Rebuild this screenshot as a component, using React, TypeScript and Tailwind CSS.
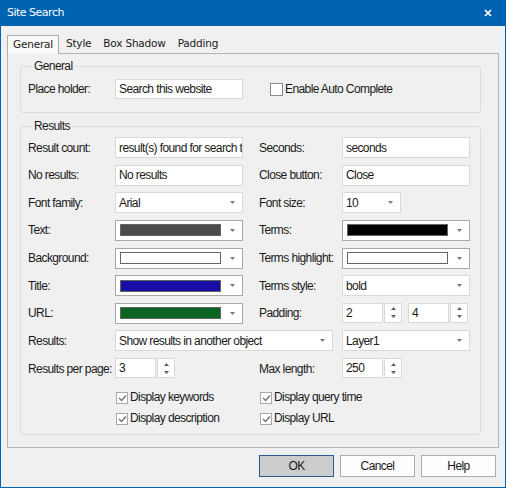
import React from "react";

const Arrow = () => (
  <svg width="5" height="3" viewBox="0 0 5 3" className="shrink-0">
    <polygon points="0,0 5,0 2.5,3" fill="#7a7a7a" />
  </svg>
);

const Input = ({ value, w = "w-[128px]" }: { value: string; w?: string }) => (
  <div className={`${w} h-[21px] border border-[#d9d9d9] bg-white pl-[3px] flex items-center overflow-hidden whitespace-nowrap`}>
    {value}
  </div>
);

const Combo = ({ value, w = "w-[128px]" }: { value: string; w?: string }) => (
  <div className={`${w} h-[21px] border border-[#d9d9d9] bg-white pl-[3px] pr-[7px] flex items-center justify-between overflow-hidden whitespace-nowrap`}>
    <span>{value}</span>
    <Arrow />
  </div>
);

const ColorCombo = ({ color }: { color: string }) => (
  <div className="w-[128px] h-[21px] border border-[#a9a9a9] bg-white pl-[4px] pr-[7px] flex items-center justify-between">
    <div className="w-[101px] h-[12px] border border-[#646464]" style={{ background: color }} />
    <Arrow />
  </div>
);

const Spin = ({ value }: { value: string }) => (
  <div className="flex gap-[1px]">
    <div className="w-[41px] h-[20px] border border-[#d9d9d9] bg-white pl-[3px] flex items-center">{value}</div>
    <div className="w-[18px] h-[20px] border border-[#d9d9d9] bg-white flex flex-col items-center justify-center gap-[5px]">
      <svg width="5" height="3" viewBox="0 0 5 3">
        <polygon points="0,3 5,3 2.5,0" fill="#606060" />
      </svg>
      <svg width="5" height="3" viewBox="0 0 5 3">
        <polygon points="0,0 5,0 2.5,3" fill="#606060" />
      </svg>
    </div>
  </div>
);

const Check = ({ checked, label, size = "w-[12px] h-[12px]" }: { checked?: boolean; label: string; size?: string }) => (
  <div className="h-[13px] flex items-center gap-[2px] whitespace-nowrap">
    <div className={`${size} shrink-0 border ${checked ? "border-[#a8a8a8]" : "border-[#8a8a8a]"} bg-white flex items-center justify-center`}>
      {checked && (
        <svg width="9" height="8" viewBox="0 0 9 8">
          <polyline points="1,4 3.5,6.5 8,1.5" fill="none" stroke="#707070" strokeWidth="1.3" />
        </svg>
      )}
    </div>
    <span className="leading-[13px]">{label}</span>
  </div>
);

const Label = ({ children, right }: { children: React.ReactNode; right?: boolean }) => (
  <div className={`h-[21px] flex items-center whitespace-nowrap ${right ? "pl-[16px]" : ""}`}>{children}</div>
);

export default function App() {
  return (
    <div className="w-[506px] h-[488px] bg-[#f0f0f0] border-x border-b border-[#0063b1] flex flex-col font-['Liberation_Sans',Arial,sans-serif] text-[12px] tracking-[-0.6px] text-[#1a1a1a]">
      {/* Title bar */}
      <div className="h-[26px] shrink-0 bg-[#0063b1] flex items-center justify-between pl-[6px] pr-[13px]">
        <span className="font-['DejaVu_Sans',sans-serif] text-[11px] tracking-[-0.5px] text-white">Site Search</span>
        <svg width="8" height="8" viewBox="0 0 8 8">
          <line x1="1" y1="1" x2="7" y2="7" stroke="white" strokeWidth="1.7" />
          <line x1="7" y1="1" x2="1" y2="7" stroke="white" strokeWidth="1.7" />
        </svg>
      </div>

      <div className="px-[6px] pt-[9px] flex flex-col">
        {/* Tabs */}
        <div className="flex items-end h-[18px] font-['DejaVu_Sans',sans-serif] text-[10.5px] tracking-[-0.2px] text-[#1a1a1a]">
          <div className="relative z-10 h-[19px] mb-[-1px] border-x border-t border-[#adadad] bg-[#f9f9f9] pl-[5px] pr-[5px] flex items-center">
            General
          </div>
          <div className="h-[18px] pl-[7px] pr-[6px] flex items-center">Style</div>
          <div className="h-[18px] px-[6px] flex items-center">Box Shadow</div>
          <div className="h-[18px] px-[6px] flex items-center">Padding</div>
        </div>

        {/* Panel */}
        <div className="h-[395px] border border-[#b4b4b4] bg-[#f0f0f0] pl-[12px] pr-[17px] pt-[5px]">
          <fieldset className="border border-[#dcdcdc] rounded-[3px] pl-[7px] pr-[10px] pt-[6px] pb-[13px]">
            <legend className="leading-[14px] ml-[4px] px-[2px]">General</legend>
            <div className="flex items-center">
              <div className="w-[87px] h-[20px] flex items-center">Place holder:</div>
              <div className="w-[128px] h-[20px] border border-[#d9d9d9] bg-white pl-[3px] flex items-center whitespace-nowrap">
                Search this website
              </div>
              <div className="ml-[27px]">
                <Check label="Enable Auto Complete" size="w-[13px] h-[13px]" />
              </div>
            </div>
          </fieldset>

          <fieldset className="mt-[6px] border border-[#dcdcdc] rounded-[3px] pl-[7px] pr-[10px] pt-[4px] pb-[9px]">
            <legend className="leading-[14px] ml-[4px] px-[2px]">Results</legend>
            <div className="grid grid-cols-[87px_128px_99px_128px] gap-y-[6.625px] items-start">
              <Label>Result count:</Label>
              <Input value="result(s) found for search term" />
              <Label right>Seconds:</Label>
              <Input value="seconds" />

              <Label>No results:</Label>
              <Input value="No results" />
              <Label right>Close button:</Label>
              <Input value="Close" />

              <Label>Font family:</Label>
              <Combo value="Arial" />
              <Label right>Font size:</Label>
              <Combo value="10" w="w-[59px]" />

              <Label>Text:</Label>
              <ColorCombo color="#4b4b4b" />
              <Label right>Terms:</Label>
              <ColorCombo color="#000000" />

              <Label>Background:</Label>
              <ColorCombo color="#ffffff" />
              <Label right>Terms highlight:</Label>
              <ColorCombo color="#ffffff" />

              <Label>Title:</Label>
              <ColorCombo color="#170ea3" />
              <Label right>Terms style:</Label>
              <Combo value="bold" />

              <Label>URL:</Label>
              <ColorCombo color="#0a6422" />
              <Label right>Padding:</Label>
              <div className="flex gap-[6px]">
                <Spin value="2" />
                <Spin value="4" />
              </div>

              <Label>Results:</Label>
              <div className="col-span-2">
                <Combo value="Show results in another object" w="w-[218px]" />
              </div>
              <Combo value="Layer1" />

              <Label>Results per page:</Label>
              <Spin value="3" />
              <Label right>Max length:</Label>
              <Spin value="250" />
            </div>

            <div className="mt-[12px] grid grid-cols-[87px_144px_211px] gap-y-[8px]">
              <div />
              <div className="pl-[1px]">
                <Check checked label="Display keywords" />
              </div>
              <div className="pl-[1px]">
                <Check checked label="Display query time" />
              </div>
              <div />
              <div className="pl-[1px]">
                <Check checked label="Display description" />
              </div>
              <div className="pl-[1px]">
                <Check checked label="Display URL" />
              </div>
            </div>
          </fieldset>
        </div>

        {/* Buttons */}
        <div className="mt-[7px] mr-[3px] flex justify-end gap-[6px]">
          <div className="w-[75px] h-[22px] border border-[#2a5a8a] bg-[#cccccc] flex items-center justify-center">OK</div>
          <div className="w-[75px] h-[22px] border border-[#adadad] bg-[#fdfdfd] flex items-center justify-center">Cancel</div>
          <div className="w-[75px] h-[22px] border border-[#adadad] bg-[#fdfdfd] flex items-center justify-center">Help</div>
        </div>
      </div>
    </div>
  );
}
